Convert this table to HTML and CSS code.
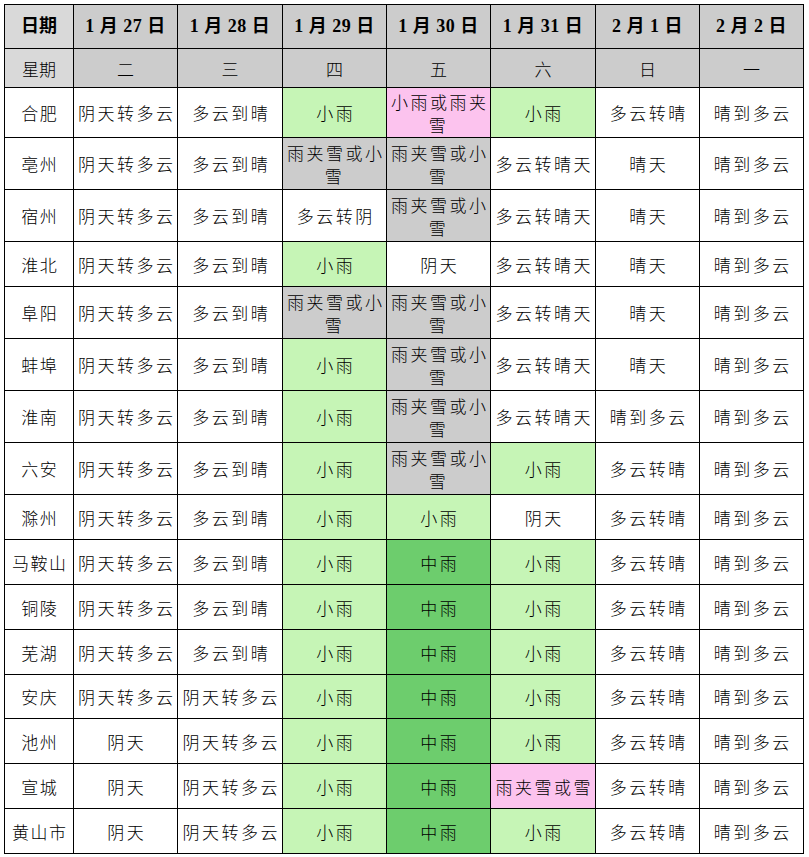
FILE: index.html
```html
<!DOCTYPE html>
<html lang="zh-CN">
<head>
<meta charset="utf-8">
<title>安徽天气预报</title>
<link rel="stylesheet" href="styles.css">
</head>
<body>
<table class="wx">
  <colgroup>
    <col class="c-city">
    <col class="c-a"><col class="c-b"><col class="c-a"><col class="c-a"><col class="c-b"><col class="c-a"><col class="c-a">
  </colgroup>
  <tr class="head">
    <th class="lab">日期</th><th>1 月 27 日</th><th>1 月 28 日</th><th>1 月 29 日</th><th>1 月 30 日</th><th>1 月 31 日</th><th>2 月 1 日</th><th>2 月 2 日</th>
  </tr>
  <tr class="week">
    <td class="lab">星期</td><td>二</td><td>三</td><td>四</td><td>五</td><td>六</td><td>日</td><td>一</td>
  </tr>
  <tr class="tall first">
    <td class="city">合肥</td><td>阴天转多云</td><td>多云到晴</td><td class="g">小雨</td><td class="p">小雨或雨夹雪</td><td class="g">小雨</td><td>多云转晴</td><td>晴到多云</td>
  </tr>
  <tr class="tall">
    <td class="city">亳州</td><td>阴天转多云</td><td>多云到晴</td><td class="s">雨夹雪或小雪</td><td class="s">雨夹雪或小雪</td><td>多云转晴天</td><td>晴天</td><td>晴到多云</td>
  </tr>
  <tr class="tall">
    <td class="city">宿州</td><td>阴天转多云</td><td>多云到晴</td><td>多云转阴</td><td class="s">雨夹雪或小雪</td><td>多云转晴天</td><td>晴天</td><td>晴到多云</td>
  </tr>
  <tr class="row">
    <td class="city">淮北</td><td>阴天转多云</td><td>多云到晴</td><td class="g">小雨</td><td>阴天</td><td>多云转晴天</td><td>晴天</td><td>晴到多云</td>
  </tr>
  <tr class="tall">
    <td class="city">阜阳</td><td>阴天转多云</td><td>多云到晴</td><td class="s">雨夹雪或小雪</td><td class="s">雨夹雪或小雪</td><td>多云转晴天</td><td>晴天</td><td>晴到多云</td>
  </tr>
  <tr class="tall">
    <td class="city">蚌埠</td><td>阴天转多云</td><td>多云到晴</td><td class="g">小雨</td><td class="s">雨夹雪或小雪</td><td>多云转晴天</td><td>晴天</td><td>晴到多云</td>
  </tr>
  <tr class="tall">
    <td class="city">淮南</td><td>阴天转多云</td><td>多云到晴</td><td class="g">小雨</td><td class="s">雨夹雪或小雪</td><td>多云转晴天</td><td>晴到多云</td><td>晴到多云</td>
  </tr>
  <tr class="tall">
    <td class="city">六安</td><td>阴天转多云</td><td>多云到晴</td><td class="g">小雨</td><td class="s">雨夹雪或小雪</td><td class="g">小雨</td><td>多云转晴</td><td>晴到多云</td>
  </tr>
  <tr class="row">
    <td class="city">滁州</td><td>阴天转多云</td><td>多云到晴</td><td class="g">小雨</td><td class="g">小雨</td><td>阴天</td><td>多云转晴</td><td>晴到多云</td>
  </tr>
  <tr class="row">
    <td class="city">马鞍山</td><td>阴天转多云</td><td>多云到晴</td><td class="g">小雨</td><td class="dg">中雨</td><td class="g">小雨</td><td>多云转晴</td><td>晴到多云</td>
  </tr>
  <tr class="row">
    <td class="city">铜陵</td><td>阴天转多云</td><td>多云到晴</td><td class="g">小雨</td><td class="dg">中雨</td><td class="g">小雨</td><td>多云转晴</td><td>晴到多云</td>
  </tr>
  <tr class="row">
    <td class="city">芜湖</td><td>阴天转多云</td><td>多云到晴</td><td class="g">小雨</td><td class="dg">中雨</td><td class="g">小雨</td><td>多云转晴</td><td>晴到多云</td>
  </tr>
  <tr class="row short">
    <td class="city">安庆</td><td>阴天转多云</td><td>阴天转多云</td><td class="g">小雨</td><td class="dg">中雨</td><td class="g">小雨</td><td>多云转晴</td><td>晴到多云</td>
  </tr>
  <tr class="row">
    <td class="city">池州</td><td>阴天</td><td>阴天转多云</td><td class="g">小雨</td><td class="dg">中雨</td><td class="g">小雨</td><td>多云转晴</td><td>晴到多云</td>
  </tr>
  <tr class="row">
    <td class="city">宣城</td><td>阴天</td><td>阴天转多云</td><td class="g">小雨</td><td class="dg">中雨</td><td class="p">雨夹雪或雪</td><td>多云转晴</td><td>晴到多云</td>
  </tr>
  <tr class="row">
    <td class="city">黄山市</td><td>阴天</td><td>阴天转多云</td><td class="g">小雨</td><td class="dg">中雨</td><td class="g">小雨</td><td>多云转晴</td><td>晴到多云</td>
  </tr>
</table>
</body>
</html>
```
FILE: styles.css
```css
html, body {
  margin: 0;
  padding: 0;
  background: #ffffff;
}
body {
  padding: 4px;
}
.wx {
  border-collapse: collapse;
  table-layout: fixed;
  width: 800px;
  font-family: "Noto Sans CJK SC", "Noto Sans", sans-serif;
  font-size: 17px;
  font-weight: 300;
  color: #000;
}
.c-city { width: 69px; }
.c-a { width: 104px; }
.c-b { width: 105px; }
.wx th, .wx td {
  border: 1px solid #000;
  padding: 0 1px;
  text-align: center;
  vertical-align: middle;
  line-height: 23px;
  letter-spacing: 2.5px;
  text-indent: 2.5px;
  overflow: hidden;
}
.wx th {
  font-family: "Liberation Serif", "Noto Sans CJK SC", serif;
  font-weight: bold;
  font-size: 18px;
  letter-spacing: 0.5px;
  text-indent: 0;
  background: #cccccc;
}
.head { height: 44px; }
.week { height: 39px; }
.week td { background: #cccccc; letter-spacing: 0; text-indent: 0; }
.wx .lab { background: #d9d9d9; letter-spacing: 0; }
.tall { height: 52px; }
.tall.first { height: 50px; }
.row { height: 45px; }
.row.short { height: 44px; }
.wx .city { letter-spacing: 1.5px; text-indent: 1.5px; }
.g { background: #c6f5b6; }
.dg { background: #6dcd6d; }
.p { background: #fcc3ee; }
.s { background: #cccccc; }
```
